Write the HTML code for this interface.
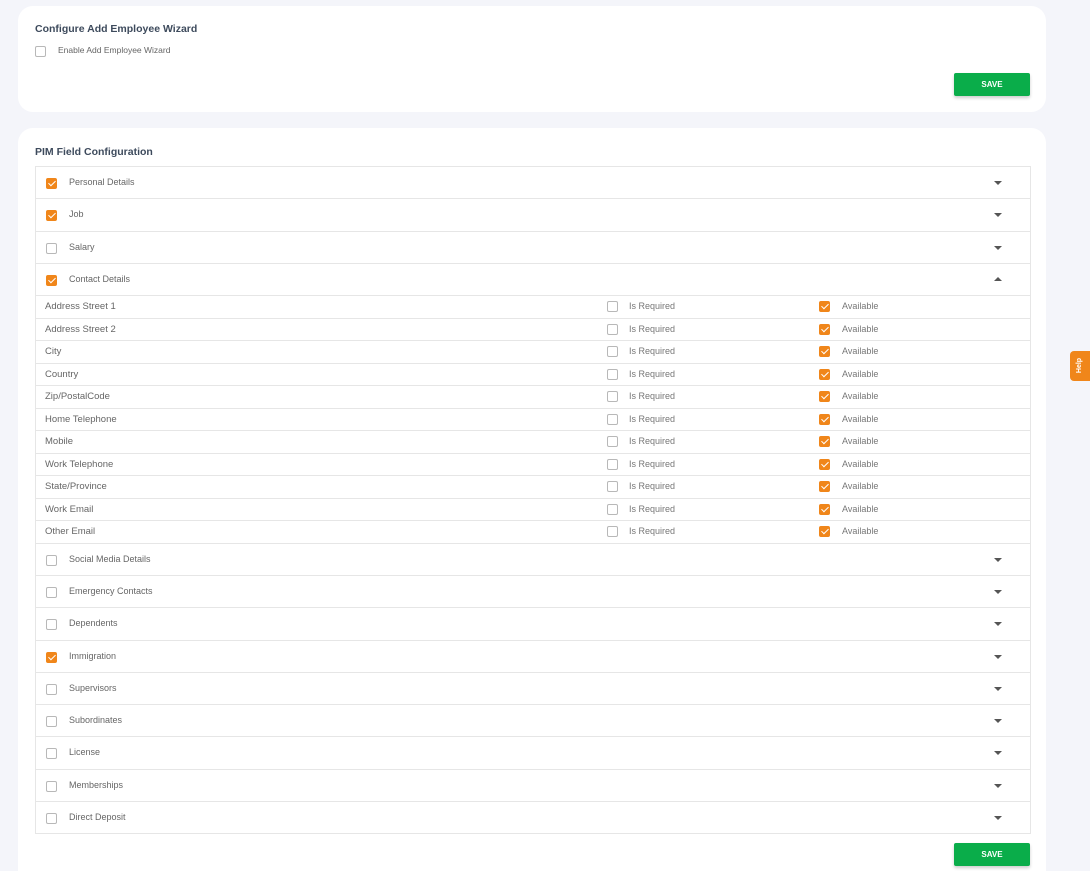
<!DOCTYPE html>
<html><head><style>
*{box-sizing:border-box;margin:0;padding:0}
html,body{width:1090px;height:871px;overflow:hidden}
body{background:#f4f5fa;font-family:"Liberation Sans",sans-serif;position:relative}
.card{position:absolute;left:18px;width:1028px;background:#fff;border-radius:15px}
h2{position:absolute;left:17px;font-size:10.5px;font-weight:bold;color:#3d4a5c}
.cb{position:absolute;width:11px;height:11px;border:1px solid #b8b8b8;border-radius:2px;background:#fff}
.cb.on{background:#f0861a;border-color:#f0861a}
.cb.on::after{content:"";position:absolute;left:3px;top:0px;width:3px;height:6px;border:solid #fff;border-width:0 1.3px 1.3px 0;transform:rotate(45deg)}
.btn{position:absolute;left:936px;width:76px;height:23px;background:#0aad4a;color:#fff;font-size:8px;font-weight:bold;text-align:center;line-height:23px;border-radius:2px;box-shadow:0 2px 3px rgba(0,0,0,.2)}
.t{position:absolute;left:35px;width:996px;border:1px solid #e6e6e6;border-bottom:none}
.r{position:relative;border-bottom:1px solid #e6e6e6;font-size:9px;color:#666}
.h{height:32.3px}
.h .cb{left:10px;top:11px}
.h span{position:absolute;left:33px;top:10px}
.ar{position:absolute;left:958px;top:14px;width:0;height:0;border-left:4px solid transparent;border-right:4px solid transparent;border-top:4px solid #555}
.ar.up{border-top:none;border-bottom:4px solid #555;top:13px}
.s{height:22.5px;font-size:9.5px}
.s .l{position:absolute;left:9px;top:5px;color:#666}
.s .c1{left:571px;top:5px}.s .c2{left:783px;top:5px}
.s .t1{position:absolute;left:593px;top:5px;font-size:9px;color:#777}
.s .t2{position:absolute;left:806px;top:5px;font-size:9px;color:#777}
</style></head><body>
<div class="card" style="top:6px;height:106px">
<h2 style="top:17px">Configure Add Employee Wizard</h2>
<div class="cb" style="left:17px;top:40px"></div>
<div style="position:absolute;left:40px;top:39px;font-size:8.5px;color:#666">Enable Add Employee Wizard</div>
<div class="btn" style="top:67px">SAVE</div>
</div>
<div class="card" style="top:128px;height:760px">
<h2 style="top:18px">PIM Field Configuration</h2>
<div class="btn" style="top:715px">SAVE</div>
</div>
<div class="t" style="top:166px">
<div class="r h"><div class="cb on"></div><span>Personal Details</span><div class="ar"></div></div>
<div class="r h"><div class="cb on"></div><span>Job</span><div class="ar"></div></div>
<div class="r h"><div class="cb"></div><span>Salary</span><div class="ar"></div></div>
<div class="r h"><div class="cb on"></div><span>Contact Details</span><div class="ar up"></div></div>
<div class="r s"><span class="l">Address Street 1</span><div class="cb c1"></div><span class="t1">Is Required</span><div class="cb on c2"></div><span class="t2">Available</span></div>
<div class="r s"><span class="l">Address Street 2</span><div class="cb c1"></div><span class="t1">Is Required</span><div class="cb on c2"></div><span class="t2">Available</span></div>
<div class="r s"><span class="l">City</span><div class="cb c1"></div><span class="t1">Is Required</span><div class="cb on c2"></div><span class="t2">Available</span></div>
<div class="r s"><span class="l">Country</span><div class="cb c1"></div><span class="t1">Is Required</span><div class="cb on c2"></div><span class="t2">Available</span></div>
<div class="r s"><span class="l">Zip/PostalCode</span><div class="cb c1"></div><span class="t1">Is Required</span><div class="cb on c2"></div><span class="t2">Available</span></div>
<div class="r s"><span class="l">Home Telephone</span><div class="cb c1"></div><span class="t1">Is Required</span><div class="cb on c2"></div><span class="t2">Available</span></div>
<div class="r s"><span class="l">Mobile</span><div class="cb c1"></div><span class="t1">Is Required</span><div class="cb on c2"></div><span class="t2">Available</span></div>
<div class="r s"><span class="l">Work Telephone</span><div class="cb c1"></div><span class="t1">Is Required</span><div class="cb on c2"></div><span class="t2">Available</span></div>
<div class="r s"><span class="l">State/Province</span><div class="cb c1"></div><span class="t1">Is Required</span><div class="cb on c2"></div><span class="t2">Available</span></div>
<div class="r s"><span class="l">Work Email</span><div class="cb c1"></div><span class="t1">Is Required</span><div class="cb on c2"></div><span class="t2">Available</span></div>
<div class="r s"><span class="l">Other Email</span><div class="cb c1"></div><span class="t1">Is Required</span><div class="cb on c2"></div><span class="t2">Available</span></div>
<div class="r h"><div class="cb"></div><span>Social Media Details</span><div class="ar"></div></div>
<div class="r h"><div class="cb"></div><span>Emergency Contacts</span><div class="ar"></div></div>
<div class="r h"><div class="cb"></div><span>Dependents</span><div class="ar"></div></div>
<div class="r h"><div class="cb on"></div><span>Immigration</span><div class="ar"></div></div>
<div class="r h"><div class="cb"></div><span>Supervisors</span><div class="ar"></div></div>
<div class="r h"><div class="cb"></div><span>Subordinates</span><div class="ar"></div></div>
<div class="r h"><div class="cb"></div><span>License</span><div class="ar"></div></div>
<div class="r h"><div class="cb"></div><span>Memberships</span><div class="ar"></div></div>
<div class="r h"><div class="cb"></div><span>Direct Deposit</span><div class="ar"></div></div>
</div>
<div style="position:absolute;left:1070px;top:351px;width:20px;height:30px;background:#f0861a;border-radius:4px 0 0 4px;color:#fff;font-size:7px;font-weight:bold"><span style="position:absolute;left:2px;top:11px;transform:rotate(-90deg)">Help</span></div>
</body></html>
